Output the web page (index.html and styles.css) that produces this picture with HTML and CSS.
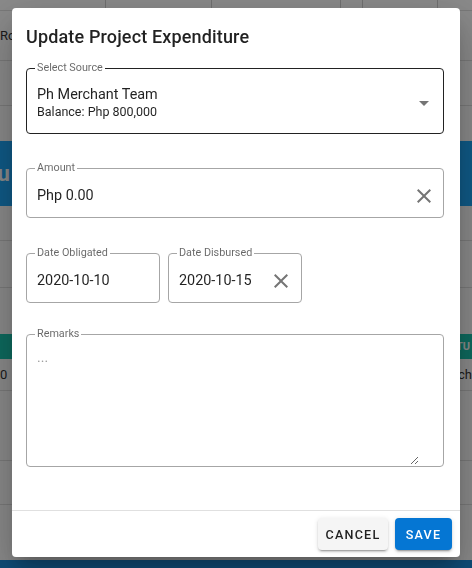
FILE: index.html
```html
<!DOCTYPE html>
<html lang="en">
<head>
<meta charset="utf-8">
<title>Update Project Expenditure</title>
<link rel="stylesheet" href="styles.css">
</head>
<body>
<div class="page">
  <div class="row hdr">
    <span class="col c1"></span><span class="col c2"></span><span class="col c3"></span><span class="col c4"></span><span class="col c5"></span><span class="col c6"></span>
  </div>
  <div class="row r-a"><span class="cell">Ro</span></div>
  <div class="row r-b"></div>
  <div class="gap g1"></div>
  <div class="band blue"><span class="band-text">tu</span></div>
  <div class="row r-c"></div>
  <div class="row r-d"></div>
  <div class="gap g2"></div>
  <div class="band teal"><span class="band-text small">STATU</span></div>
  <div class="row r-e"><span class="cell">0</span><span class="cell">ch</span></div>
  <div class="row r-f"></div>
  <div class="row r-g"></div>
  <div class="gap g3"></div>
  <div class="band bottom"></div>
</div>

<div class="backdrop"></div>

<div class="dialog-wrap">
  <div class="dialog" role="dialog">
    <h2 class="title">Update Project Expenditure</h2>
    <div class="content">
      <fieldset class="field field-select">
        <legend>Select Source</legend>
        <div class="field-body select-body">
          <div class="select-text">
            <div class="primary">Ph Merchant Team</div>
            <div class="secondary">Balance: Php 800,000</div>
          </div>
          <svg class="icon" viewBox="0 0 24 24" width="24" height="24"><path d="M7 10l5 5 5-5z"/></svg>
        </div>
      </fieldset>

      <fieldset class="field field-amount">
        <legend>Amount</legend>
        <div class="field-body">
          <span class="value">Php 0.00</span>
          <svg class="icon" viewBox="0 0 24 24" width="24" height="24"><path d="M19 6.41L17.59 5 12 10.59 6.41 5 5 6.41 10.59 12 5 17.59 6.41 19 12 13.41 17.59 19 19 17.59 13.41 12z"/></svg>
        </div>
      </fieldset>

      <div class="date-row">
        <fieldset class="field field-date">
          <legend>Date Obligated</legend>
          <div class="field-body">
            <span class="value">2020-10-10</span>
          </div>
        </fieldset>
        <fieldset class="field field-date">
          <legend>Date Disbursed</legend>
          <div class="field-body">
            <span class="value">2020-10-15</span>
            <svg class="icon" viewBox="0 0 24 24" width="24" height="24"><path d="M19 6.41L17.59 5 12 10.59 6.41 5 5 6.41 10.59 12 5 17.59 6.41 19 12 13.41 17.59 19 19 17.59 13.41 12z"/></svg>
          </div>
        </fieldset>
      </div>

      <fieldset class="field field-remarks">
        <legend>Remarks</legend>
        <textarea class="remarks" placeholder="..."></textarea>
      </fieldset>
    </div>
    <div class="actions">
      <button class="btn btn-cancel" type="button">Cancel</button>
      <button class="btn btn-save" type="button">Save</button>
    </div>
  </div>
</div>
</body>
</html>
```

FILE: styles.css
```css
* { box-sizing: border-box; }

html, body {
  margin: 0;
  padding: 0;
  width: 472px;
  height: 568px;
  overflow: hidden;
}

body {
  font-family: Roboto, "Liberation Sans", Arial, sans-serif;
  background: #ffffff;
  color: rgba(0, 0, 0, 0.87);
}

/* ---------- page behind the dialog ---------- */
.page {
  display: flex;
  flex-direction: column;
  height: 568px;
}

.row {
  border-bottom: 1px solid #e0e0e0;
  display: flex;
  align-items: center;
  justify-content: space-between;
  font-size: 13px;
  color: #333;
}

.hdr { height: 11px; align-items: stretch; justify-content: flex-start; }
.col { border-right: 1px solid #cfcfcf; }
.c1 { width: 106px; }
.c2 { width: 106px; }
.c3 { width: 129px; }
.c4 { width: 22px; }
.c5 { width: 75px; }
.c6 { flex: 1; border-right: none; }

.r-a { height: 50px; }
.r-b { height: 45px; }
.g1 { height: 35px; }
.blue { height: 65px; background: #1ca6f8; }
.r-c { height: 35px; }
.r-d { height: 47px; }
.g2 { height: 46px; }
.teal { height: 25px; background: #1ac4ae; justify-content: flex-end; }
.r-e { height: 32px; }
.r-f { height: 70px; }
.r-g { height: 44px; }
.g3 { flex: 1; }
.bottom { height: 8px; background: #1c8ede; }

.band {
  display: flex;
  align-items: center;
  color: #fff;
  font-weight: 700;
  overflow: hidden;
}
.band-text { font-size: 22px; margin-left: -10px; }
.band-text.small { font-size: 11px; margin-left: 0; margin-right: 2px; }

/* ---------- backdrop & dialog ---------- */
.backdrop {
  position: fixed;
  inset: 0;
  background: rgba(0, 0, 0, 0.46);
}

.dialog-wrap {
  position: fixed;
  inset: 0;
  padding: 8px 12px 11px;
  display: flex;
}

.dialog {
  width: 448px;
  background: #fff;
  border-radius: 4px;
  box-shadow: 0 11px 15px -7px rgba(0,0,0,0.2), 0 24px 38px 3px rgba(0,0,0,0.14), 0 9px 46px 8px rgba(0,0,0,0.12);
  display: flex;
  flex-direction: column;
}

.title {
  margin: 0;
  padding: 17px 14px 0;
  font-size: 18px;
  line-height: 24px;
  font-weight: 500;
  color: rgba(0, 0, 0, 0.87);
  letter-spacing: 0.15px;
}

.content {
  flex: 1;
  padding: 12px 16px 0 14px;
  display: flex;
  flex-direction: column;
}

.field {
  margin: 0;
  padding: 0 10px 0 10px;
  border: 1px solid #a6a6a6;
  border-radius: 4px;
  min-width: 0;
}

.field legend {
  margin-left: -2px;
  padding: 0 2px;
  font-size: 10.8px;
  line-height: 14px;
  color: rgba(0, 0, 0, 0.6);
}

.field-body {
  display: flex;
  align-items: center;
  justify-content: space-between;
}

.icon {
  fill: #757575;
  flex: none;
  margin-right: -3px;
}

.value {
  font-size: 14.4px;
  line-height: 19px;
}

/* select */
.field-select { border-color: #222; }
.select-body { height: 58px; padding-bottom: 3px; }
.primary { font-size: 14.4px; line-height: 18px; }
.secondary { font-size: 12.5px; line-height: 16px; }

/* amount */
.field-amount { margin-top: 27px; }
.field-amount .field-body { height: 42px; padding-bottom: 1px; }

/* dates */
.date-row {
  margin-top: 28px;
  display: flex;
  gap: 8px;
}
.field-date { width: 134px; }
.field-date .field-body { height: 42px; padding-bottom: 1px; }
.field-date .icon { margin-right: -2px; }

/* remarks */
.field-remarks { margin-top: 24px; padding: 0 24px 0 0; height: 140px; display: flex; }
.field-remarks legend { margin-left: 8px; }
.remarks {
  display: block;
  width: 100%;
  height: 124px;
  border: none;
  outline: none;
  resize: vertical;
  padding: 7px 10px 0;
  font-family: inherit;
  font-size: 14px;
  line-height: 18px;
  background: transparent;
  color: rgba(0,0,0,0.87);
}
.remarks::placeholder { color: #9e9e9e; }

/* actions */
.actions {
  border-top: 1px solid #e0e0e0;
  padding: 7px 8px 7px;
  display: flex;
  justify-content: flex-end;
  gap: 7px;
}

.btn {
  height: 32px;
  border: none;
  border-radius: 4px;
  font-family: inherit;
  font-size: 12.6px;
  font-weight: 500;
  letter-spacing: 1.2px;
  text-transform: uppercase;
  padding: 0 6px;
}

.btn-cancel {
  width: 70px;
  background: #f5f5f5;
  color: rgba(0,0,0,0.87);
  box-shadow: 0 3px 1px -2px rgba(0,0,0,0.2), 0 2px 2px 0 rgba(0,0,0,0.14), 0 1px 5px 0 rgba(0,0,0,0.12);
}

.btn-save {
  width: 57px;
  background: #0576d3;
  color: #fff;
  box-shadow: 0 3px 1px -2px rgba(0,0,0,0.2), 0 2px 2px 0 rgba(0,0,0,0.14), 0 1px 5px 0 rgba(0,0,0,0.12);
}
```
